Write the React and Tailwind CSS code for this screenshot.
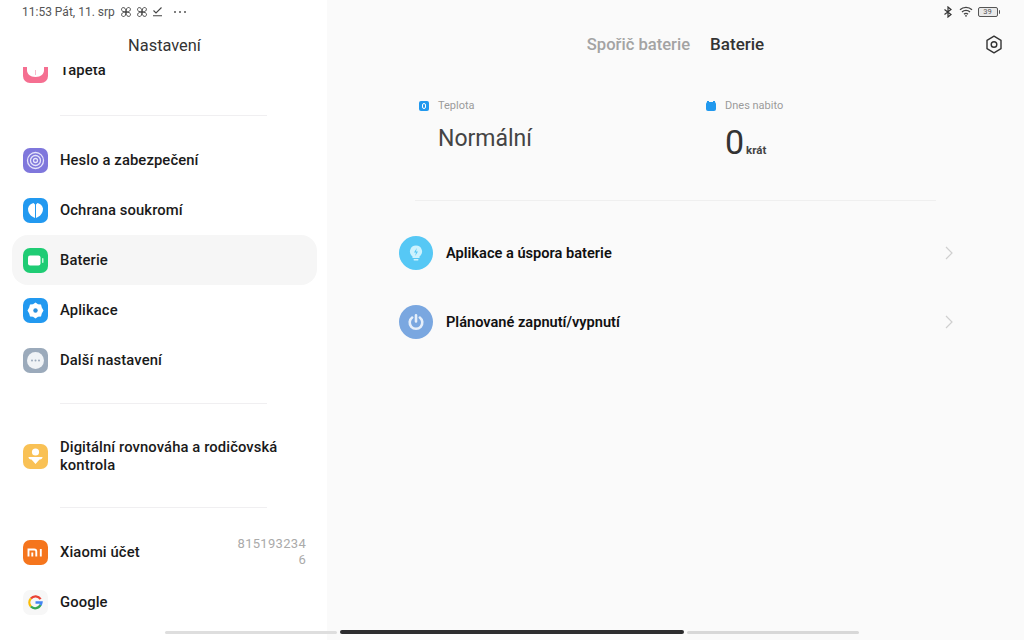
const Tile = ({ className, children }) => (
  <div className={`w-[25px] h-[25px] rounded-[7px] shrink-0 flex items-center justify-center ${className}`}>
    <svg width="25" height="25" viewBox="0 0 25 25">{children}</svg>
  </div>
);

const Row = ({ icon, label, active, right }) => (
  <div className={`h-[50px] ml-3 mr-[10px] pl-[11px] pr-[11px] flex items-center gap-[12px] rounded-[16px] ${active ? "bg-[#f6f6f6]" : ""}`}>
    {icon}
    <span className="flex-1 text-[14.8px] leading-[18px] font-medium text-[#1a1a1a] tracking-[0.1px]">{label}</span>
    {right}
  </div>
);

const Divider = () => <div className="h-px bg-[#f0eff1] mx-[60px]" />;

const Pinwheel = () => (
  <svg width="12" height="12" viewBox="0 0 12 12" fill="none" stroke="#444" strokeWidth="1">
    <path d="M6 6C3 6 1.500 5 1.500 3.400 1.500 2 3 1.200 4.200 1.800 5.600 2.500 6 4 6 6ZM6 6c0-3 1-4.500 2.600-4.500C10 1.500 10.800 3 10.200 4.200 9.500 5.600 8 6 6 6ZM6 6c3 0 4.500 1 4.500 2.600 0 1.400-1.500 2.200-2.700 1.600C6.400 9.500 6 8 6 6ZM6 6c0 3-1 4.500-2.600 4.500C2 10.500 1.200 9 1.800 7.800 2.500 6.400 4 6 6 6Z" />
  </svg>
);

export default function App() {
  return (
    <div className="relative w-[1024px] h-[640px] overflow-hidden flex bg-white text-[#222]" style={{ fontFamily: "Roboto, 'Noto Sans', sans-serif" }}>
      <aside className="w-[327px] h-full shrink-0 bg-white flex flex-col">
        <div className="h-[23px] pl-[22px] flex items-center gap-[4px] text-[12px] text-[#555]">
          <span className="mr-[1px]">11:53 Pát, 11. srp</span>
          <Pinwheel />
          <Pinwheel />
          <svg width="11" height="11" viewBox="0 0 11 11" fill="none" stroke="#444" strokeWidth="1.100"><path d="M1.500 4.500 4 7l5.500-5.500M1 9.800h9" /></svg>
          <span className="ml-[7px] flex gap-[3px] items-center">
            <i className="w-[2px] h-[2px] rounded-full bg-[#555]" />
            <i className="w-[2px] h-[2px] rounded-full bg-[#555]" />
            <i className="w-[2px] h-[2px] rounded-full bg-[#555]" />
          </span>
        </div>
        <div className="h-[44px] pt-[2px] pl-[2px] flex items-center justify-center text-[16.4px] text-[#333]">Nastavení</div>
        <div className="flex-1 overflow-hidden">
          <div className="-mt-[22px]">
            <Row label="Tapeta" icon={<Tile className="bg-[#f56f91]"><path d="M4 2v10c0 4 3 7 8.500 7S21 16 21 12V2Z" fill="#fff" /><path d="M12.500 12v5" stroke="#f7a8bc" strokeWidth=".8" /></Tile>} />
            <div className="h-[20px]" />
            <Divider />
            <div className="h-[19px]" />
            <Row label="Heslo a zabezpečení" icon={<Tile className="bg-[#7f77dc]"><g fill="none" stroke="#e6e4fa" strokeWidth="1.300"><circle cx="12.500" cy="12.500" r="8" /><circle cx="12.500" cy="12.500" r="5" /><circle cx="12.500" cy="12.500" r="2" /></g></Tile>} />
            <Row label="Ochrana soukromí" icon={<Tile className="bg-[#2299f0]"><path d="M12 6.500 10.500 5C8 5.500 5.500 7.500 5 10.500c0 5 3 8 7 9.500Zm1 0L14.500 5c2.500.5 5 2.500 5.500 5.500 0 5-3 8-7 9.500Z" fill="#fff" /></Tile>} />
            <Row label="Baterie" active icon={<Tile className="bg-[#1fcc74]"><rect x="5" y="7.500" width="12.500" height="10" rx="2" fill="#fff" /><rect x="19" y="10" width="1.500" height="5" rx=".7" fill="#c8f3dc" /></Tile>} />
            <Row label="Aplikace" icon={<Tile className="bg-[#2299f0]"><path d="M12.500 4.500 15 6.300l3 .2.800 3 1.700 3-1.700 3-.8 3-3 .2-2.500 1.800L10 18.700l-3-.2-.8-3-1.700-3 1.700-3 .8-3 3-.2Z" fill="#fff" /><circle cx="12.500" cy="12.500" r="2.200" fill="#2b8fdc" /></Tile>} />
            <Row label="Další nastavení" icon={<Tile className="bg-[#9baabb]"><circle cx="12.500" cy="12.500" r="8.500" fill="#f0f3f6" /><g fill="#9baabb"><circle cx="9" cy="12.500" r="1" /><circle cx="12.500" cy="12.500" r="1" /><circle cx="16" cy="12.500" r="1" /></g></Tile>} />
            <div className="h-[18px]" />
            <Divider />
            <div className="h-[27px]" />
            <Row label="Digitální rovnováha a rodičovská kontrola" icon={<Tile className="bg-[#f9c155]"><circle cx="12.500" cy="8" r="3.600" fill="#fff" /><path d="M5.500 13h14c0 1.500-1 2.500-2.500 2.500h-.5L12.500 20l-4-4.500H8C6.500 15.500 5.500 14.500 5.500 13Z" fill="#fff" /></Tile>} />
            <div className="h-[26px]" />
            <Divider />
            <div className="h-[19px]" />
            <Row
              label="Xiaomi účet"
              icon={<Tile className="bg-[#f5751d]"><g fill="none" stroke="#fff" strokeWidth="1.900"><path d="M5.500 16.500V9.500h5.700c1.300 0 2.100.8 2.100 2.100v4.900M9.300 12.500v4M17.800 9v7.500" /></g></Tile>}
              right={<span className="w-[70px] text-right text-[13px] leading-[16px] text-[#aaa] tracking-[0.3px] break-all">8151932346</span>}
            />
            <Row label="Google" icon={<Tile className="bg-[#f7f7f7]"><g fill="none" strokeWidth="2.300"><path d="M17.600 9.200a6 6 0 0 0-9.700-.7" stroke="#ea4335" /><path d="M7.900 8.500a6 6 0 0 0 0 8" stroke="#fbbc05" /><path d="M7.900 16.500a6 6 0 0 0 9.700-1.700" stroke="#34a853" /><path d="M12.500 12.500h6a6 6 0 0 1-1 2.500" stroke="#4285f4" /></g></Tile>} />
            <Row label="" icon={<Tile className="bg-[#35bfae]" />} />
          </div>
        </div>
      </aside>

      <main className="flex-1 h-full bg-[#fafafa] flex flex-col">
        <div className="h-[23px] flex items-center justify-end pr-[24px] gap-[5px]">
          <svg width="12" height="12" viewBox="0 0 12 12" fill="none" stroke="#333" strokeWidth="1.200"><path d="M2.500 3.500 9 8.500 6 11V1l3 2.500-6.500 5" /></svg>
          <svg width="14" height="11" viewBox="0 0 14 11" fill="none" stroke="#444" strokeWidth="1.300"><path d="M1 3.800a8.500 8.500 0 0 1 12 0M3 6a5.600 5.600 0 0 1 8 0M5 8.200a2.800 2.800 0 0 1 4 0" /><circle cx="7" cy="9.800" r=".9" fill="#444" stroke="none" /></svg>
          <div className="flex items-center">
            <div className="w-[20px] h-[10px] border border-[#555] rounded-[2px] flex items-center justify-center text-[7.5px] leading-none text-[#555] bg-[#e9e9e9]">39</div>
            <div className="w-[1.500px] h-[4px] bg-[#555] ml-[1px] rounded-r-sm" />
          </div>
        </div>
        <div className="h-[44px] relative flex items-center justify-center gap-[20px] font-medium">
          <span className="text-[16.6px] text-[#a3a3a3]">Spořič baterie</span>
          <span className="text-[17px] text-[#333]">Baterie</span>
          <svg className="absolute right-[21px] top-[12px]" width="18" height="19" viewBox="0 0 18 19" fill="none" stroke="#333" strokeWidth="1.400"><path d="M9 1.200 16 5.300v8.400L9 17.800 2 13.700V5.300Z" strokeLinejoin="round" /><circle cx="9" cy="9.500" r="2.800" /></svg>
        </div>

        <div className="mt-[33px] ml-[92px] flex h-[72px]">
          <div className="w-[287px]">
            <div className="flex items-center gap-[9px] h-[12px] text-[11px] text-[#9a9a9a]">
              <div className="w-[10px] h-[10px] rounded-[2px] bg-[#2299ee] flex items-center justify-center"><div className="w-[4px] h-[6px] rounded-full border border-white" /></div>
              <span>Teplota</span>
            </div>
            <div className="ml-[19px] mt-[13px] text-[23px] leading-[27px] text-[#444]">Normální</div>
          </div>
          <div>
            <div className="flex items-center gap-[9px] h-[12px] text-[11px] text-[#9a9a9a]">
              <div className="w-[10px] h-[9px] rounded-[2px] bg-[#2299ee] relative"><i className="absolute -top-[1px] left-[1px] w-[2px] h-[2px] bg-[#2299ee]" /><i className="absolute -top-[1px] right-[1px] w-[2px] h-[2px] bg-[#2299ee]" /></div>
              <span>Dnes nabito</span>
            </div>
            <div className="ml-[19px] mt-[10px] flex items-baseline gap-[2px]">
              <span className="text-[34px] leading-[40px] text-[#333]">0</span>
              <span className="text-[11.5px] font-bold text-[#444]">krát</span>
            </div>
          </div>
        </div>

        <div className="h-px bg-[#efefef] ml-[88px] mr-[88px] mt-[28px]" />

        <div className="mt-[17px] ml-[72px] mr-[71px]">
          <div className="h-[69px] flex items-center gap-[13px]">
            <div className="w-[34px] h-[34px] rounded-full bg-[#56c8f5] flex items-center justify-center">
              <svg width="20" height="20" viewBox="0 0 20 20"><path d="M10 2.500a6 6 0 0 0-3.500 10.900V15h7v-1.600A6 6 0 0 0 10 2.500Z" fill="#cdf2fd" /><path d="M10.800 5 8 9.500h2L9.200 13 12 8.500h-2Z" fill="#56c8f5" /><rect x="7.500" y="16" width="5" height="1.500" rx=".7" fill="#cdf2fd" /></svg>
            </div>
            <span className="flex-1 pt-[2px] text-[14.6px] font-semibold text-[#111]">Aplikace a úspora baterie</span>
            <svg width="8" height="14" viewBox="0 0 8 14" fill="none" stroke="#cfcfcf" strokeWidth="1.200"><path d="m1 1 6 6-6 6" /></svg>
          </div>
          <div className="h-[69px] flex items-center gap-[13px]">
            <div className="w-[34px] h-[34px] rounded-full bg-[#7aa7e0] flex items-center justify-center">
              <svg width="20" height="20" viewBox="0 0 20 20" fill="none" stroke="#e6effa" strokeWidth="2.600" strokeLinecap="round"><path d="M6.200 5.500a6.300 6.300 0 1 0 7.600 0M10 3.200v6.300" /></svg>
            </div>
            <span className="flex-1 pt-[2px] text-[14.6px] font-semibold text-[#111]">Plánované zapnutí/vypnutí</span>
            <svg width="8" height="14" viewBox="0 0 8 14" fill="none" stroke="#cfcfcf" strokeWidth="1.200"><path d="m1 1 6 6-6 6" /></svg>
          </div>
        </div>
      </main>

      <div className="absolute left-[165px] bottom-[6px] flex items-center gap-[3px] h-[4px]">
        <div className="w-[172px] h-[3px] rounded-full bg-[#dedede]" />
        <div className="w-[344px] h-[4px] rounded-full bg-[#2c2c2e]" />
        <div className="w-[172px] h-[3px] rounded-full bg-[#d8d8d8]" />
      </div>
    </div>
  );
}
